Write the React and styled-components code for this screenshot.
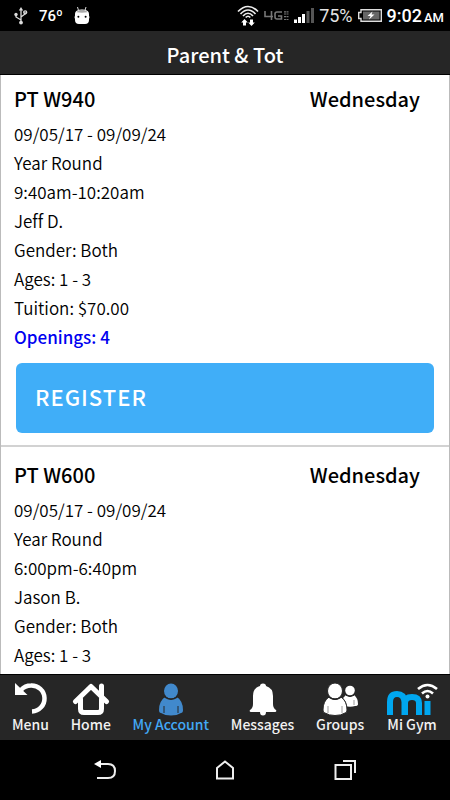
import React from "react";
import styled, { createGlobalStyle } from "styled-components";

const GlobalStyle = createGlobalStyle`
  *, *::before, *::after { box-sizing: border-box; }
  body {
    margin: 0;
    background: #000;
    color: #000;
    font-family: "Noto Sans CJK SC", "Noto Sans", sans-serif;
    font-variant-ligatures: none;
  }
  button { font: inherit; border: 0; cursor: pointer; }
`;

const Screen = styled.div`
  display: flex;
  flex-direction: column;
  height: 100vh;
  overflow: hidden;
`;

const StatusBar = styled.div`
  display: flex;
  flex: none;
  align-items: center;
  justify-content: space-between;
  height: 31px;
  padding: 0 6px 0 14px;
  background: #000;
  color: #fff;
  font-family: Roboto, sans-serif;
`;

const StatusGroup = styled.div`
  display: flex;
  align-items: center;
  gap: ${(p) => p.$gap}px;
  white-space: nowrap;
`;

const Temperature = styled.span`
  font-family: "Liberation Sans Narrow", Roboto, sans-serif;
  font-size: 15px;
  font-weight: 500;
`;

const Percent = styled.span`
  font-size: 18px;
  color: #e4e4e4;
`;

const Clock = styled.div`
  display: flex;
  align-items: baseline;
  gap: 2px;
  font-size: 18px;
  font-weight: 500;
`;

const Meridiem = styled.small`
  font-size: 13px;
  font-weight: 500;
`;

const Header = styled.header`
  display: flex;
  flex: none;
  align-items: center;
  justify-content: center;
  height: 44px;
  padding-top: 4px;
  background: #262626;
  border-bottom: 1px solid #000;
`;

const PageTitle = styled.h1`
  margin: 0;
  font-size: 20px;
  line-height: 28px;
  font-weight: 500;
  color: #fff;
`;

const ClassList = styled.main`
  flex: 1;
  min-height: 0;
  overflow: hidden;
  background: #fff;
  border: solid #bbb;
  border-width: 0 1px;
`;

const Card = styled.article`
  padding: 9px 13px 12px;
  border-bottom: 2px solid #d2d2d2;

  & + & { padding-top: 13px; }
`;

const CardHeader = styled.div`
  display: flex;
  justify-content: space-between;
  padding-right: 16px;
  margin-bottom: 5px;
`;

const CardTitle = styled.h2`
  margin: 0;
  font-size: 20px;
  line-height: 30px;
  font-weight: 500;
`;

const Detail = styled.p`
  margin: 0;
  font-size: 17px;
  line-height: 29px;
  font-weight: ${(p) => (p.$open ? 500 : 350)};
  color: ${(p) => (p.$open ? "#0000f0" : "#000")};
`;

const RegisterButton = styled.button`
  display: block;
  width: calc(100% - 4px);
  height: 70px;
  margin: 12px 2px 0;
  padding: 0 19px 4px;
  border-radius: 6px;
  background: #40aef8;
  color: #fff;
  font-size: 22px;
  font-weight: 500;
  letter-spacing: 1px;
  text-align: left;
`;

const TabBar = styled.nav`
  display: flex;
  flex: none;
  justify-content: space-between;
  height: 66px;
  padding: 8px 12px 0;
  background: #262626;
  border-top: 1px solid #000;
`;

const Tab = styled.button`
  display: flex;
  flex-direction: column;
  align-items: center;
  padding: 0;
  background: none;
  color: ${(p) => (p.$active ? "#42a9f5" : "#f2f2f2")};
  font-size: 14px;
  line-height: 16px;
  font-weight: 500;
  white-space: nowrap;
`;

const TabIcon = styled.svg`
  display: block;
  width: ${(p) => p.$width}px;
  height: 33px;
`;

const SystemBar = styled.nav`
  display: grid;
  flex: none;
  grid-template-columns: repeat(3, 1fr);
  height: 60px;
  padding: 0 10%;
  background: #000;
`;

const SystemButton = styled.button`
  display: flex;
  align-items: center;
  justify-content: center;
  padding: 0;
  background: none;
`;

const UsbIcon = () => (
  <svg width="14" height="18" viewBox="0 0 14 18" fill="none" stroke="#ddd" strokeWidth="1.3" aria-hidden="true">
    <path d="M7 3v12M7 13L2 10V7M7 10l4-3V5" />
    <path d="M7 0l2.2 3.5H4.8z" fill="#ddd" stroke="none" />
    <circle cx="2" cy="7.5" r="1.7" fill="#ddd" stroke="none" />
    <circle cx="11.2" cy="5.3" r="1.5" />
    <circle cx="7" cy="15.6" r="1.9" fill="#ddd" stroke="none" />
  </svg>
);

const RobotIcon = () => (
  <svg width="16" height="18" viewBox="0 0 16 18" aria-hidden="true">
    <path d="M3.5 0l1 3.5M12 0l-1 3.5" stroke="#ddd" strokeWidth="1" />
    <path d="M1 7Q1 2.5 8 2.5T15 7v1.500Q16 10 15 12v1Q15 17 11 17H5Q1 17 1 13v-1Q0 10 1 8.500z" fill="#fff" />
    <path d="M2.500 5.300Q4 2.800 8 2.800T13.500 5.300Q8 6 2.500 5.300z" fill="#aaa" />
    <circle cx="4.400" cy="9.700" r="1" fill="#000" />
    <circle cx="11.600" cy="9.700" r="1" fill="#000" />
  </svg>
);

const WifiIcon = () => (
  <svg width="22" height="22" viewBox="0 0 22 22" fill="none" stroke="#eee" strokeWidth="1.7" aria-hidden="true">
    <path d="M1 6.5Q11-3.5 21 6.5M3.5 9Q11 1 18.5 9M6 11Q11 5.5 16 11M8.7 12.5Q11 10 13.3 12.5" />
    <path d="M7.5 14l3.3 3.5H9v3H6v-3H4.2zM14.500 21l3.300-3.500H16v-3h-3v3h-1.800z" fill="#fff" stroke="none" />
  </svg>
);

const LteIcon = () => (
  <svg width="25" height="10" viewBox="0 0 25 10" fill="none" stroke="#777" strokeWidth="1.6" aria-hidden="true">
    <path d="M1 0v5.500h8M7.500 0v9M18 1h-5q-2 0-2 2v3q0 2 2 2h4.500V5H14" />
    <path d="M20 .800h4.500M20 3h4.500M20 5.600h4.500M20 8.500h4.500" strokeWidth="1.200" strokeDasharray="2 .5" />
  </svg>
);

const SignalIcon = () => (
  <svg width="20" height="15" viewBox="0 0 20 15" aria-hidden="true">
    <path d="M0 11.500h3V15H0zM4 9h3v6H4zM8 6h3v9H8z" fill="#fff" />
    <path d="M12.500 3h3v12h-3zM17 0h3v15h-3z" fill="#555" />
  </svg>
);

const BatteryIcon = () => (
  <svg width="24" height="13" viewBox="0 0 24 13" aria-hidden="true">
    <path d="M3 .700h20.300v11.600H3V9.500H.7v-6H3z" fill="#000" stroke="#ddd" strokeWidth="1.400" />
    <path d="M5 2.500h16.500v8H5z" fill="#666" />
    <path d="M14.500 2.500l-5 4.500h3l-1.500 3.500 5.500-5h-3z" fill="#fff" />
  </svg>
);

const MenuIcon = () => (
  <TabIcon $width={33} viewBox="0 0 33 33" aria-hidden="true">
    <path d="M7 7Q11 2.500 17 2.500A13 13 0 0 1 18 28.500" fill="none" stroke="#fff" strokeWidth="4.500" />
    <path d="M1 0l12.500 12H1z" fill="#fff" />
  </TabIcon>
);

const HomeIcon = () => (
  <TabIcon $width={38} viewBox="0 0 38 33" fill="none" stroke="#fff" strokeWidth="5" strokeLinecap="round" strokeLinejoin="round" aria-hidden="true">
    <path d="M3.500 18.500L19 3.500l15.500 15" />
    <path d="M29.500 3v9" />
    <path d="M8.500 16v10q0 3.500 3.500 3.500h14q3.500 0 3.500-3.500V16" />
  </TabIcon>
);

const AccountIcon = () => (
  <TabIcon $width={26} viewBox="0 0 26 33" fill="#4189cc" aria-hidden="true">
    <ellipse cx="13" cy="8" rx="7" ry="7.500" />
    <path d="M7 14q6 5 12 0Q25 18 25 27q0 3-2 3-4 2.500-10 2.500T3 30q-2 0-2-3Q1 18 7 14z" />
    <path d="M6 23v7M20 23v7" stroke="#262626" strokeWidth="1" />
    <path d="M6.500 14q6.500 4.500 13 0" fill="none" stroke="#262626" strokeWidth="1.500" />
  </TabIcon>
);

const BellIcon = () => (
  <TabIcon $width={28} viewBox="0 0 28 33" fill="#fff" aria-hidden="true">
    <path d="M11 3q0-2.500 3-2.500T17 3Q24 5 24 13v8q0 4 3 6 1 2-1 2H17q0 3.500-3 3.500T11 29H2q-2 0-1-2 3-2 3-6v-8Q4 5 11 3z" />
  </TabIcon>
);

const GroupsIcon = () => (
  <TabIcon $width={36} viewBox="0 0 36 33" fill="#fff" aria-hidden="true">
    <circle cx="28" cy="7.500" r="4.800" />
    <path d="M24 12q4 3 8 0 4 3 4 9 0 2-3 2-3 1-8 .500Q24 18 21 15z" />
    <path d="M24 12.300q4 2.700 8 0" fill="none" stroke="#262626" strokeWidth="1" />
    <path d="M32 17v5" stroke="#999" strokeWidth="1" />
    <path d="M7 14q6 5 12 0Q25 18 25 27q0 3-2 3-4 2.500-10 2.500T3 30q-2 0-2-3Q1 18 7 14z" stroke="#262626" strokeWidth="1" />
    <ellipse cx="13" cy="8" rx="7.500" ry="8" stroke="#262626" strokeWidth="1" />
    <path d="M6.500 14q6.500 4.500 13 0" fill="none" stroke="#262626" strokeWidth="1.500" />
    <path d="M6 23v7M20 23v7" stroke="#999" strokeWidth="1" />
  </TabIcon>
);

const GymLogo = () => (
  <TabIcon $width={52} viewBox="0 0 52 33" fill="none" aria-hidden="true">
    <path d="M4 32V19Q4 11 11 11T18.500 19V32M19 32V20Q19 14 26 14T33 20V32" stroke="#00a7f0" strokeWidth="6" />
    <path d="M38.500 18h6v14h-6z" fill="#00a7f0" />
    <path d="M32 6Q41.500-2 51 6M36 10.500Q41.500 5.500 47 10.500" stroke="#fff" strokeWidth="2.600" />
    <circle cx="41.500" cy="13.500" r="2" fill="#fff" />
  </TabIcon>
);

const classes = [
  {
    name: "PT W940",
    day: "Wednesday",
    details: ["09/05/17 - 09/09/24", "Year Round", "9:40am-10:20am", "Jeff D.", "Gender: Both", "Ages: 1 - 3", "Tuition: $70.00"],
    openings: 4,
  },
  {
    name: "PT W600",
    day: "Wednesday",
    details: ["09/05/17 - 09/09/24", "Year Round", "6:00pm-6:40pm", "Jason B.", "Gender: Both", "Ages: 1 - 3"],
  },
];

const tabs = [
  { label: "Menu", Icon: MenuIcon },
  { label: "Home", Icon: HomeIcon },
  { label: "My Account", Icon: AccountIcon, active: true },
  { label: "Messages", Icon: BellIcon },
  { label: "Groups", Icon: GroupsIcon },
  { label: "Mi Gym", Icon: GymLogo },
];

export default function App() {
  return (
    <>
      <GlobalStyle />
      <Screen>
        <StatusBar>
          <StatusGroup $gap={11}>
            <UsbIcon />
            <Temperature>76º</Temperature>
            <RobotIcon />
          </StatusGroup>
          <StatusGroup $gap={5}>
            <WifiIcon />
            <LteIcon />
            <SignalIcon />
            <Percent>75%</Percent>
            <BatteryIcon />
            <Clock>
              <span>9:02</span>
              <Meridiem>AM</Meridiem>
            </Clock>
          </StatusGroup>
        </StatusBar>
        <Header>
          <PageTitle>Parent &amp; Tot</PageTitle>
        </Header>
        <ClassList>
          {classes.map((c) => (
            <Card key={c.name}>
              <CardHeader>
                <CardTitle>{c.name}</CardTitle>
                <CardTitle as="div">{c.day}</CardTitle>
              </CardHeader>
              {c.details.map((d) => (
                <Detail key={d}>{d}</Detail>
              ))}
              {c.openings && (
                <>
                  <Detail $open>Openings: {c.openings}</Detail>
                  <RegisterButton type="button">REGISTER</RegisterButton>
                </>
              )}
            </Card>
          ))}
        </ClassList>
        <TabBar aria-label="Main">
          {tabs.map(({ label, Icon, active }) => (
            <Tab key={label} type="button" $active={active} aria-current={active ? "page" : undefined}>
              <Icon />
              {label}
            </Tab>
          ))}
        </TabBar>
        <SystemBar aria-label="System">
          <SystemButton type="button" aria-label="Back">
            <svg width="22" height="20" viewBox="0 0 22 20" fill="none" aria-hidden="true">
              <path d="M5 4h9q7 0 7 7t-7 7H3" stroke="#eee" strokeWidth="2" />
              <path d="M0 4l7-4v8z" fill="#fff" />
            </svg>
          </SystemButton>
          <SystemButton type="button" aria-label="Home screen">
            <svg width="20" height="20" viewBox="0 0 20 20" fill="none" aria-hidden="true">
              <path d="M2 8l8-6.500L18 8v10.500H2z" stroke="#eee" strokeWidth="2" />
            </svg>
          </SystemButton>
          <SystemButton type="button" aria-label="Recent apps">
            <svg width="22" height="20" viewBox="0 0 22 20" fill="none" stroke="#eee" strokeWidth="2" aria-hidden="true">
              <path d="M1.500 5h15.500v14H1.500zM9 1h12v12" />
            </svg>
          </SystemButton>
        </SystemBar>
      </Screen>
    </>
  );
}
